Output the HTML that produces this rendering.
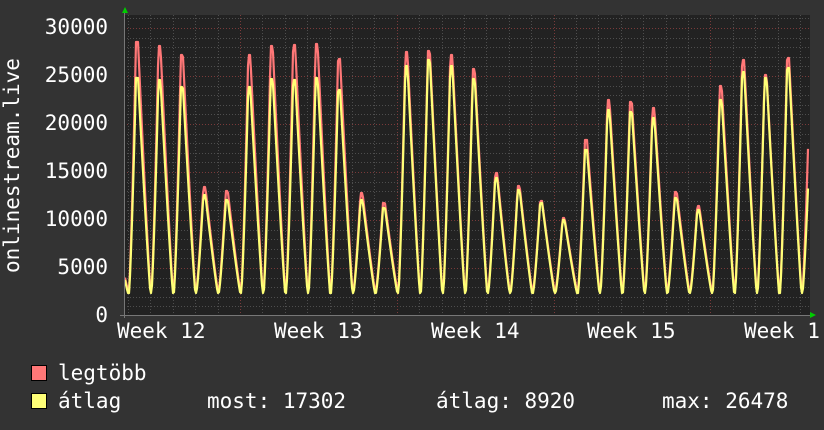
<!DOCTYPE html>
<html><head><meta charset="utf-8"><style>
html,body{margin:0;padding:0;background:#333;}
body{width:824px;height:430px;position:relative;overflow:hidden;font-family:"DejaVu Sans Mono","Liberation Mono",monospace;color:#fff;}
.t{position:absolute;font-size:21px;line-height:21px;white-space:pre;}
.yl{position:absolute;right:716px;font-size:21px;line-height:21px;text-align:right;}
.sq{position:absolute;width:14px;height:14px;border:1px solid #000;}
</style></head><body>
<svg id="g" width="824" height="430" style="position:absolute;left:0;top:0">
<rect x="124" y="15" width="686" height="300" fill="#222"/>
<g id="grid"></g>
<polyline id="red" fill="none" stroke="#f77" stroke-width="2.2" stroke-linejoin="round"/>
<polyline id="yel" fill="none" stroke="#ff7" stroke-width="2.2" stroke-linejoin="round"/>
<line x1="120" y1="315.5" x2="812" y2="315.5" stroke="#777" stroke-width="1"/>
<line x1="124.5" y1="12" x2="124.5" y2="318" stroke="#777" stroke-width="1"/>
<polygon points="122,13 128,13 125,7" fill="#0c0"/>
<polygon points="810,312 810,318 816,315" fill="#0c0"/>
</svg>
<div class="yl" style="top:17px">30000</div>
<div class="yl" style="top:65px">25000</div>
<div class="yl" style="top:113px">20000</div>
<div class="yl" style="top:161px">15000</div>
<div class="yl" style="top:209px">10000</div>
<div class="yl" style="top:257px">5000</div>
<div class="yl" style="top:305px">0</div>
<div class="t" style="left:2px;top:176px;transform:rotate(-90deg);transform-origin:center;width:0;"><span style="position:absolute;left:-97px;top:0;">onlinestream.live</span></div>
<div class="t" style="left:117px;top:321px">Week 12</div>
<div class="t" style="left:274px;top:321px">Week 13</div>
<div class="t" style="left:431px;top:321px">Week 14</div>
<div class="t" style="left:587px;top:321px">Week 15</div>
<div class="t" style="left:744px;top:321px">Week 1</div>
<div class="sq" style="left:31px;top:365px;background:#f77"></div>
<div class="sq" style="left:31px;top:393px;background:#ff7"></div>
<div class="t" style="left:58px;top:363px">legtöbb</div>
<div class="t" style="left:58px;top:391px">átlag</div>
<div class="t" style="left:207px;top:391px">most: 17302</div>
<div class="t" style="left:436px;top:391px">átlag: 8920</div>
<div class="t" style="left:662px;top:391px">max: 26478</div>
<script>
(function(){
var ns="http://www.w3.org/2000/svg",g=document.getElementById("grid");
function ln(x1,y1,x2,y2,c){var l=document.createElementNS(ns,"line");l.setAttribute("x1",x1);l.setAttribute("y1",y1);l.setAttribute("x2",x2);l.setAttribute("y2",y2);l.setAttribute("stroke",c);l.setAttribute("stroke-width","1");l.setAttribute("stroke-dasharray","1,2");g.appendChild(l);}
for(var i=1;i<=31;i++){var y=Math.round(316-i*9.6)+0.5;ln(124,y,810,y,i%5==0?"#7a3a3a":"#4e4e4e");}
for(var d=-5;d<40;d++){var x=240+d*22.4;if(x<126||x>809)continue;x=Math.round(x)+0.5;ln(x,15,x,318,(d%7==0)?"#7a3a3a":"#4e4e4e");}
var pk=[[42,78],[46,80],[55,87],[187,195],[191,200],[55,87],[46,79],[45,80],[44,78],[59,90],[193,200],[203,208],[52,66],[51,60],[55,66],[69,79],[173,178],[186,190],[201,203],[218,220],[140,150],[100,110],[102,112],[108,118],[192,198],[206,210],[86,100],[60,72],[75,78],[58,68],[97,150]];
function val(x,k){var tr=k?293:290;var best=tr;
for(var i=-1;i<pk.length;i++){var p=136+i*22.45;var py=i<0?230:pk[i][k];var t=x-p,v=0;
if(t>=-7&&t<=0)v=Math.pow((t+7)/7,1.3);else if(t>0&&t<=2)v=1;else if(t>2&&t<14.4)v=Math.pow(1-(t-2)/12.4,1.1);
var y=tr-(tr-py)*v;if(y<best)best=y;}
return best;}
var r=[],yv=[];
for(var x=125;x<=808;x+=1){r.push(x+","+val(x,0).toFixed(1));yv.push(x+","+val(x,1).toFixed(1));}
document.getElementById("red").setAttribute("points",r.join(" "));
document.getElementById("yel").setAttribute("points",yv.join(" "));
})();
</script>
</body></html>
